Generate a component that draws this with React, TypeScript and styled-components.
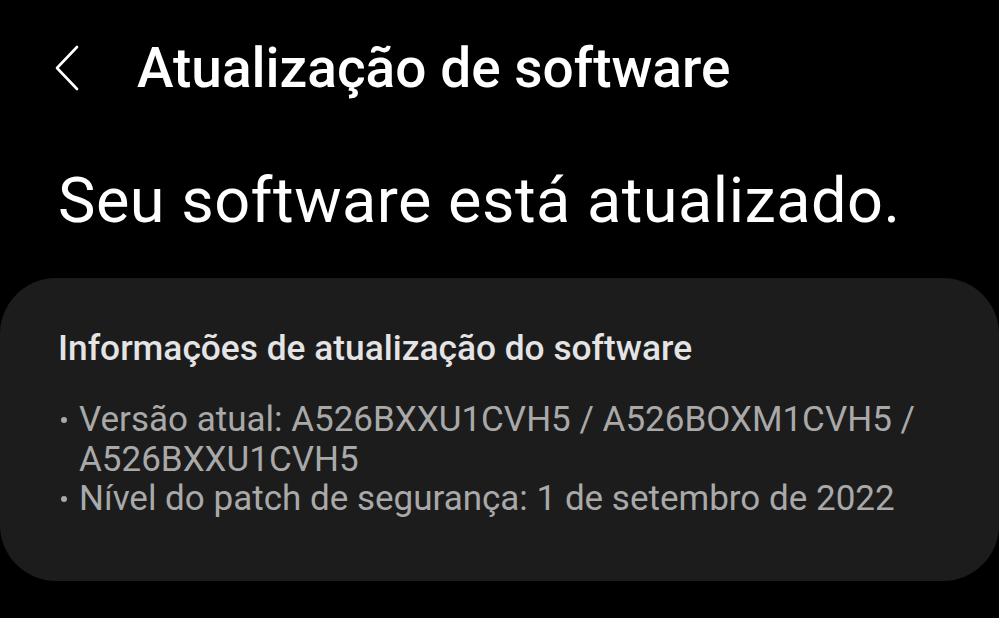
import * as React from "react";
import styled, { createGlobalStyle } from "styled-components";

const GlobalStyle = createGlobalStyle`
  html, body {
    margin: 0;
    padding: 0;
    background: #000;
  }
  body {
    width: 999px;
    height: 618px;
    overflow: hidden;
    font-family: Roboto, "Noto Sans", sans-serif;
    -webkit-font-smoothing: antialiased;
  }
`;

const Screen = styled.div`
  width: 999px;
  height: 618px;
  background: #000;
  display: flex;
  flex-direction: column;
`;

const Header = styled.header`
  display: flex;
  align-items: center;
  padding: 36px 0 0 55px;
  height: 64px;
`;

const BackButton = styled.button`
  display: flex;
  align-items: center;
  justify-content: center;
  width: 24px;
  height: 46px;
  padding: 0;
  margin-right: 58px;
  border: none;
  background: none;
  color: #fff;
`;

const Title = styled.h1`
  margin: 0;
  font-size: 55px;
  line-height: 64px;
  font-weight: 500;
  color: #fff;
`;

const Status = styled.h2`
  margin: 64px 0 0 58px;
  font-size: 63px;
  line-height: 74px;
  font-weight: 400;
  color: #fff;
  letter-spacing: 0.5px;
`;

const Card = styled.section`
  margin-top: 40px;
  background: #1c1c1c;
  border-radius: 56px;
  padding: 49px 60px 62px 58px;
`;

const CardTitle = styled.h3`
  margin: 0 0 31px;
  font-size: 35.3px;
  line-height: 42px;
  font-weight: 500;
  color: #e4e4e4;
`;

const InfoList = styled.ul`
  margin: 0;
  padding: 0;
  list-style: none;
`;

const InfoItem = styled.li`
  display: flex;
  align-items: flex-start;
  font-size: 35px;
  line-height: 39.5px;
  color: #a9a9a9;
`;

const Dot = styled.span`
  flex: none;
  width: 6px;
  height: 6px;
  border-radius: 50%;
  background: #a9a9a9;
  margin: 17px 12px 0 3px;
`;

const ChevronLeft = () => (
  <svg width="24" height="46" viewBox="0 0 24 46" fill="none">
    <path
      d="M22 2 L2 23 L22 44"
      stroke="currentColor"
      strokeWidth="2.6"
      strokeLinecap="round"
      strokeLinejoin="round"
    />
  </svg>
);

export default function App() {
  return (
    <>
      <GlobalStyle />
      <Screen>
        <Header>
          <BackButton aria-label="Voltar">
            <ChevronLeft />
          </BackButton>
          <Title>Atualização de software</Title>
        </Header>
        <Status>Seu software está atualizado.</Status>
        <Card>
          <CardTitle>Informações de atualização do software</CardTitle>
          <InfoList>
            <InfoItem>
              <Dot />
              <span>Versão atual: A526BXXU1CVH5 / A526BOXM1CVH5 / A526BXXU1CVH5</span>
            </InfoItem>
            <InfoItem>
              <Dot />
              <span>Nível do patch de segurança: 1 de setembro de 2022</span>
            </InfoItem>
          </InfoList>
        </Card>
      </Screen>
    </>
  );
}
